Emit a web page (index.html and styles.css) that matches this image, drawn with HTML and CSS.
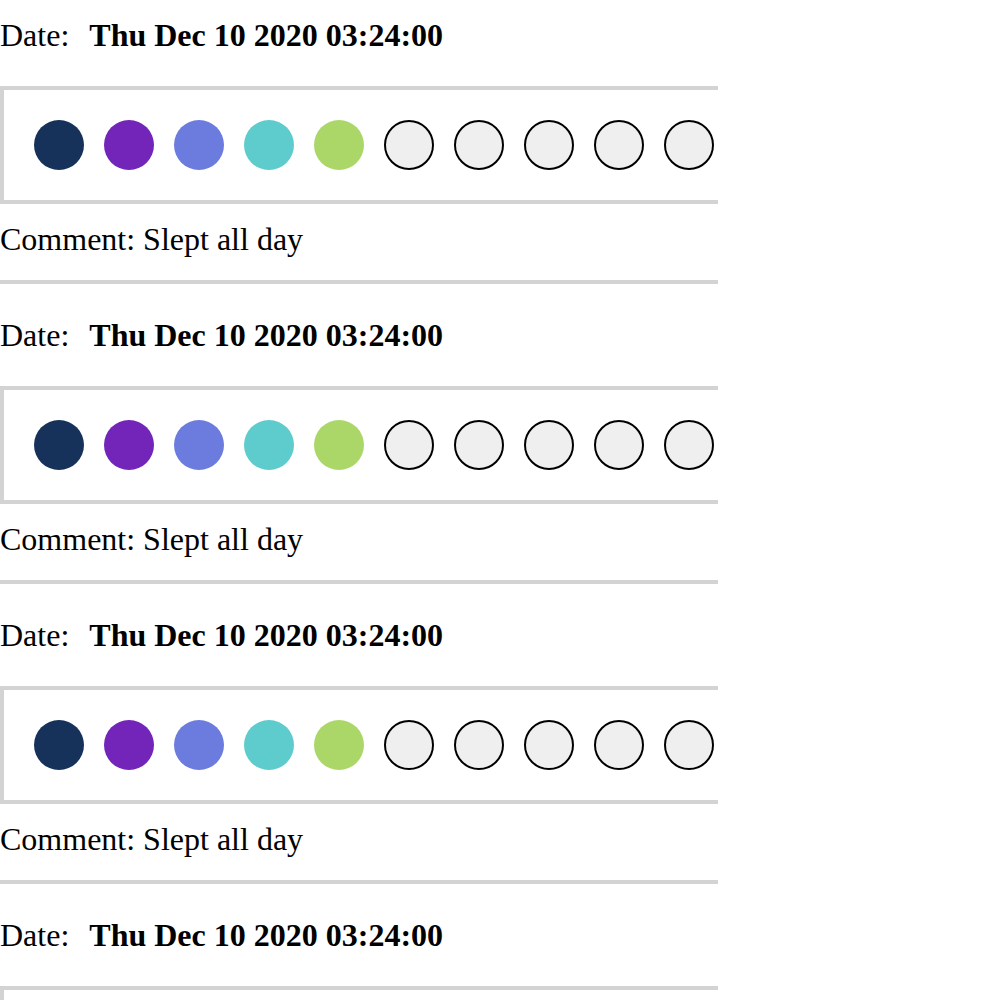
FILE: index.html
```html
<!DOCTYPE html>
<html>
<head>
<meta charset="utf-8">
<link rel="stylesheet" href="styles.css">
</head>
<body>
<div class="list">
  <div class="entry">
    <div class="date">Date:<b class="date-value">Thu Dec 10 2020 03:24:00</b></div>
    <div class="scale">
      <span class="dot c1"></span><span class="dot c2"></span><span class="dot c3"></span><span class="dot c4"></span><span class="dot c5"></span>
      <span class="dot empty"></span><span class="dot empty"></span><span class="dot empty"></span><span class="dot empty"></span><span class="dot empty"></span>
    </div>
    <div class="comment">Comment: Slept all day</div>
    <div class="rule"></div>
  </div>
  <div class="entry">
    <div class="date">Date:<b class="date-value">Thu Dec 10 2020 03:24:00</b></div>
    <div class="scale">
      <span class="dot c1"></span><span class="dot c2"></span><span class="dot c3"></span><span class="dot c4"></span><span class="dot c5"></span>
      <span class="dot empty"></span><span class="dot empty"></span><span class="dot empty"></span><span class="dot empty"></span><span class="dot empty"></span>
    </div>
    <div class="comment">Comment: Slept all day</div>
    <div class="rule"></div>
  </div>
  <div class="entry">
    <div class="date">Date:<b class="date-value">Thu Dec 10 2020 03:24:00</b></div>
    <div class="scale">
      <span class="dot c1"></span><span class="dot c2"></span><span class="dot c3"></span><span class="dot c4"></span><span class="dot c5"></span>
      <span class="dot empty"></span><span class="dot empty"></span><span class="dot empty"></span><span class="dot empty"></span><span class="dot empty"></span>
    </div>
    <div class="comment">Comment: Slept all day</div>
    <div class="rule"></div>
  </div>
  <div class="entry">
    <div class="date">Date:<b class="date-value">Thu Dec 10 2020 03:24:00</b></div>
    <div class="scale">
      <span class="dot c1"></span><span class="dot c2"></span><span class="dot c3"></span><span class="dot c4"></span><span class="dot c5"></span>
      <span class="dot empty"></span><span class="dot empty"></span><span class="dot empty"></span><span class="dot empty"></span><span class="dot empty"></span>
    </div>
    <div class="comment">Comment: Slept all day</div>
    <div class="rule"></div>
  </div>
</div>
</body>
</html>
```
FILE: styles.css
```css
html, body {
  margin: 0;
  padding: 0;
  background: #fff;
}
body {
  font-family: "Liberation Serif", "Times New Roman", serif;
  font-size: 32px;
  color: #000;
}
.list {
  display: flex;
  flex-direction: column;
  gap: 33px;
  padding-top: 17px;
}
.entry {
  width: 718px;
  display: flex;
  flex-direction: column;
}
.date {
  line-height: 37px;
  white-space: nowrap;
}
.date-value {
  margin-left: 20px;
}
.scale {
  margin-top: 32px;
  display: flex;
  gap: 20px;
  padding: 30px 0 30px 30px;
  border: 4px solid #d3d3d3;
  border-right: none;
}
.dot {
  width: 50px;
  height: 50px;
  border-radius: 50%;
  box-sizing: border-box;
  flex: none;
}
.c1 { background: #16325a; }
.c2 { background: #7324b9; }
.c3 { background: #6b7bde; }
.c4 { background: #5ecbcd; }
.c5 { background: #abd769; }
.empty {
  background: #efefef;
  border: 2px solid #000;
}
.comment {
  margin-top: 17px;
  line-height: 37px;
}
.rule {
  margin-top: 22px;
  height: 4px;
  background: #d3d3d3;
}
```
